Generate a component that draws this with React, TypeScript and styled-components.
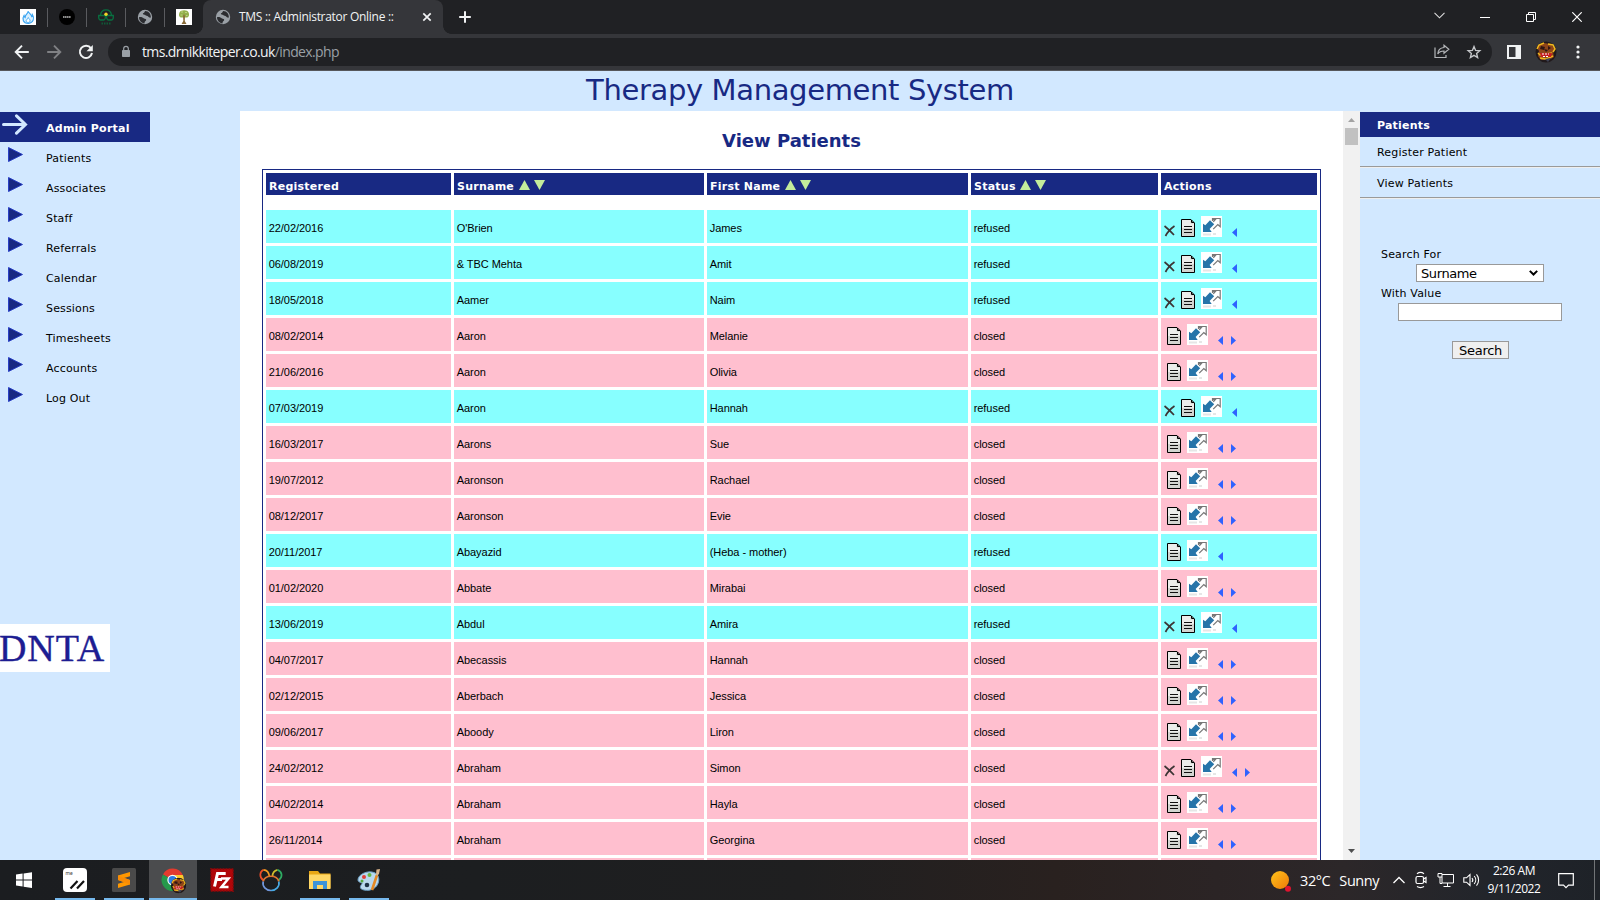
import React from "react";
import styled, { createGlobalStyle } from "styled-components";

const NAVY = "#182983";
const SKY = "#d2e8ff";
const VERDANA = `Verdana, "DejaVu Sans", sans-serif`;
const SEGOE = `"Segoe UI", "Open Sans", "Noto Sans", sans-serif`;

const Global = createGlobalStyle`
  * { box-sizing: border-box; }
  html, body { margin: 0; padding: 0; overflow: hidden; background: ${SKY}; }
  svg { display: block; flex: none; }
`;

const Screen = styled.div`
  width: 1600px;
  height: 900px;
  display: flex;
  flex-direction: column;
  overflow: hidden;
  font-family: ${VERDANA};
  color: #000;
`;

/* ---------- browser window ---------- */

const TabStrip = styled.div`
  height: 34px;
  flex: none;
  display: flex;
  align-items: center;
  background: #202124;
  padding-left: 9px;
`;

const PinnedTab = styled.div<{ $divider: boolean }>`
  width: 39px;
  height: 19px;
  display: flex;
  align-items: center;
  justify-content: center;
  border-right: 1px solid ${(p) => (p.$divider ? "#5a5b5f" : "transparent")};
`;

const ActiveTab = styled.div`
  width: 240px;
  height: 34px;
  margin-left: -1px;
  padding: 0 9px 0 12px;
  display: flex;
  align-items: center;
  position: relative;
  background: #35363a;
  border-radius: 8px 8px 0 0;
  &::before, &::after {
    content: "";
    position: absolute;
    bottom: 0;
    width: 8px;
    height: 8px;
  }
  &::before { left: -8px; background: radial-gradient(circle at 0 0, #202124 7.5px, #35363a 8px); }
  &::after { right: -8px; background: radial-gradient(circle at 100% 0, #202124 7.5px, #35363a 8px); }
`;

const TabTitle = styled.span`
  flex: 1;
  margin-left: 8px;
  font: 12px/16px ${SEGOE};
  letter-spacing: -0.29px;
  color: #f1f3f4;
  white-space: nowrap;
`;

const NewTab = styled.div`
  width: 44px;
  display: flex;
  justify-content: center;
`;

const WindowButtons = styled.div`
  margin-left: auto;
  display: flex;
  height: 28px;
`;

const WindowButton = styled.div`
  width: 46px;
  display: flex;
  align-items: center;
  justify-content: center;
  &:first-child { padding-bottom: 4px; }
`;

const Toolbar = styled.div`
  height: 37px;
  flex: none;
  display: flex;
  align-items: center;
  padding: 0 6px 1px 6px;
  background: #35363a;
  border-bottom: 1px solid #56575b;
`;

const NavButton = styled.div`
  width: 32px;
  display: flex;
  justify-content: center;
`;

const Omnibox = styled.div`
  width: 1384px;
  height: 28px;
  margin-left: 6px;
  padding: 0 9px 0 12px;
  display: flex;
  align-items: center;
  border-radius: 14px;
  background: #202124;
`;

const Url = styled.span`
  margin-left: 10px;
  flex: 1;
  font: 14px/20px ${SEGOE};
  letter-spacing: -0.62px;
  color: #f1f3f4;
  span { color: #9aa0a6; }
`;

const OmniAction = styled.div`
  width: 32px;
  display: flex;
  justify-content: center;
  &:last-child { width: 18px; margin-left: 7px; }
`;

const BarActions = styled.div`
  display: flex;
  align-items: center;
  margin-left: 6px;
`;

/* ---------- page ---------- */

const Banner = styled.header`
  height: 40px;
  flex: none;
  display: flex;
  justify-content: center;
  background: ${SKY};
  color: ${NAVY};
  font-size: 29px;
  line-height: 38px;
  letter-spacing: -0.36px;
  white-space: nowrap;
`;

const Body = styled.div`
  height: 749px;
  flex: none;
  display: flex;
  background: ${SKY};
`;

const Sidebar = styled.nav`
  width: 240px;
  padding-top: 1px;
  display: flex;
  flex-direction: column;
`;

const PortalTitle = styled.div`
  width: 150px;
  height: 30px;
  padding: 2px 0 0 2px;
  display: flex;
  background: ${NAVY};
  color: #fff;
  font-size: 11px;
  font-weight: bold;
  letter-spacing: 0.25px;
  line-height: 30px;
  span { margin-left: 18px; white-space: nowrap; }
`;

const MenuItem = styled.a`
  height: 30px;
  padding: 5px 0 0 8px;
  display: flex;
  font-size: 11px;
  letter-spacing: 0.16px;
  line-height: 24px;
  span { margin-left: 23px; }
`;

const Logo = styled.div`
  width: 110px;
  height: 48px;
  margin-top: 212px;
  overflow: hidden;
  background: #fff;
  color: #1d1d92;
  font: 38px/48px "Liberation Serif", serif;
  letter-spacing: 0.9px;
  text-indent: -1px;
  -webkit-text-stroke: 0.4px #1d1d92;
`;

const Main = styled.main`
  width: 1103px;
  padding: 0 22px;
  overflow: hidden;
  background: #fff;
`;

const Heading = styled.h1`
  height: 58px;
  margin: 0;
  text-align: center;
  color: ${NAVY};
  font-size: 18px;
  line-height: 60px;
  letter-spacing: 0;
`;

const Table = styled.div`
  display: flex;
  flex-direction: column;
  gap: 3px;
  padding: 3px;
  border: 1px solid ${NAVY};
`;

const Row = styled.div`
  flex: none;
  display: grid;
  grid-template-columns: 185px 250px 261px 187px 156px;
  column-gap: 3px;
`;

const HeadRow = styled(Row)`
  height: 22px;
  margin-bottom: 12px;
`;

const HeadCell = styled.div`
  display: flex;
  align-items: center;
  padding: 5px 0 0 3px;
  background: ${NAVY};
  color: #fff;
  font-size: 11px;
  font-weight: bold;
  letter-spacing: 0.24px;
  white-space: nowrap;
`;

const SortArrows = styled.span`
  display: flex;
  gap: 4px;
  margin: 0 0 4px 4.5px;
`;

const Cell = styled.div<{ $refused: boolean }>`
  height: 33px;
  padding: 1px 0 0 2.7px;
  background: ${(p) => (p.$refused ? "#87ffff" : "#ffbfcf")};
  font: 11px/34px Arial, "Liberation Sans", sans-serif;
  letter-spacing: -0.05px;
  white-space: nowrap;
`;

const ActionCell = styled(Cell)`
  display: flex;
  align-items: flex-start;
  padding: 6px 0 0 3px;
`;

const DeleteIcon = styled.svg`
  margin: 9px 3px 0 0;
`;
const NoteIcon = styled.svg`
  margin: 3px 6px 0 3px;
`;
const Pager = styled.div`
  display: flex;
  gap: 8px;
  margin: 12px 0 0 10px;
`;

const Scrollbar = styled.div`
  width: 17px;
  display: flex;
  flex-direction: column;
  align-items: center;
  padding: 7px 0;
  background: #f1f1f1;
`;

const Thumb = styled.div`
  width: 13px;
  height: 17px;
  margin: 6px 0 auto;
  background: #c1c1c1;
`;

const RightPanel = styled.aside`
  width: 240px;
  padding-top: 1px;
`;

const PanelTitle = styled.div`
  height: 25px;
  padding-left: 17px;
  background: ${NAVY};
  color: #fff;
  font-size: 11px;
  font-weight: bold;
  letter-spacing: 0.2px;
  line-height: 28px;
`;

const PanelLink = styled.a`
  display: block;
  height: 31px;
  padding-left: 17px;
  border-bottom: 1px solid #eee;
  box-shadow: inset 0 -1px 0 #9a9a9a;
  font-size: 11px;
  line-height: 32px;
  letter-spacing: 0.2px;
`;

const SearchForm = styled.div`
  display: flex;
  flex-direction: column;
  padding-top: 48px;
`;

const Label = styled.label`
  height: 18px;
  margin-left: 21px;
  font-size: 11px;
  line-height: 16px;
  letter-spacing: 0.17px;
`;

const Select = styled.div`
  width: 128px;
  height: 18px;
  margin: -1px 0 4px 56px;
  padding: 0 5px 0 4px;
  display: flex;
  align-items: center;
  justify-content: space-between;
  border: 1px solid #999;
  background: #fff;
  font-size: 13px;
  letter-spacing: -0.4px;
`;

const TextField = styled.input`
  width: 164px;
  height: 18px;
  margin: -1px 0 20px 38px;
  padding: 0 2px;
  border: 1px solid #999;
  border-radius: 0;
  background: #fff;
`;

const SearchButton = styled.button`
  width: 57px;
  height: 18px;
  margin-left: 92px;
  padding: 1px 0 0;
  border: 1px solid #999;
  border-radius: 0;
  background: #efefef;
  color: #000;
  font: 13px/16px ${VERDANA};
  letter-spacing: -0.3px;
`;

/* ---------- taskbar ---------- */

const Taskbar = styled.footer`
  height: 40px;
  flex: none;
  display: flex;
  background: linear-gradient(90deg, #1b1d20 0%, #1c1e20 30%, #1f1f20 50%, #29211f 66%, #2b2425 76%, #2c2729 84%, #22252b 93%, #1e2228 100%);
  color: #fff;
  font-family: ${SEGOE};
`;

const TaskButton = styled.div<{ $state?: "open" | "active" }>`
  width: 48px;
  height: 40px;
  margin-right: 1px;
  display: flex;
  flex-direction: column;
  align-items: center;
  justify-content: space-between;
  padding-top: 8px;
  background: ${(p) => (p.$state === "active" ? "#4b4c4e" : "transparent")};
  &::after {
    content: "";
    width: ${(p) => (p.$state === "active" ? 48 : 40)}px;
    height: 2px;
    background: ${(p) => (p.$state ? "#76b9ed" : "transparent")};
  }
  &:first-child { margin-right: 3px; }
`;

const Tray = styled.div`
  margin-left: auto;
  width: 331px;
  display: flex;
  align-items: center;
`;

const Weather = styled.div`
  width: 123px;
  display: flex;
  align-items: center;
  font-size: 14.5px;
  line-height: 20px;
  letter-spacing: -0.4px;
  padding-top: 2px;
  span { margin-left: 9px; white-space: nowrap; }
`;

const TrayIcons = styled.div`
  width: 88px;
  display: flex;
  align-items: center;
  justify-content: space-between;
`;

const Clock = styled.div`
  width: 68px;
  margin-left: 0;
  text-align: center;
  font-size: 12px;
  line-height: 18px;
  letter-spacing: -0.45px;
`;

const Notice = styled.div`
  margin-left: 10px;
`;

const DesktopEdge = styled.div`
  width: 1px;
  height: 40px;
  margin-left: 20px;
  background: #717477;
`;

/* ---------- drawings ---------- */

const Globe = () => (
  <svg width="16" height="16" viewBox="0 0 16 16">
    <circle cx="8" cy="8" r="7.2" fill="#9aa0a6" />
    <path d="M2 8.2c2-.4 4 .2 5 1.4 1 .4 2.300.2 2.200 1.500-.2 1.300-1.800 1.200-1.700 3.300C4.500 14 2 11.500 2 8.200zM8.200 2c-1 1-.7 2-2.200 2.200-.6.800.6 1.600 2 1.600.8 1.400 2.400.4 3.200 1.800.4.900 1.500 1.200 2.600 1 .4-3.400-2-6.600-5.600-6.600z" fill="#2b2c30" />
  </svg>
);

const Flame = () => (
  <svg width="16" height="16" viewBox="0 0 16 16">
    <rect width="16" height="16" fill="#fff" />
    <path d="M8.300 2c.4 2.500 3.200 3.300 3.400 5.500.7-.3.800-1 .8-1.700 2.200 3.400.9 8-4 8.500C3 14.500 1.800 10 4 6.500c.2 1 .4 1.500 1.100 1.900C5 5.500 8.200 5 8.300 2z" fill="#d9f0ff" stroke="#3ba5f2" strokeWidth="1.200" />
    <path d="M8.300 8.500c.3 1.300 1.900 1.700 1.800 3.300-.2 2.200-3.800 2.200-4 0 0-1.500 1.900-1.700 2.200-3.300z" fill="#fff" stroke="#3ba5f2" strokeWidth=".9" />
  </svg>
);

const BlackDisc = () => (
  <svg width="16" height="16" viewBox="0 0 16 16">
    <circle cx="8" cy="8" r="8" fill="#000" />
    <path d="M4 8h8" stroke="#bbb" strokeWidth="1.600" strokeDasharray="1.600 .4" />
  </svg>
);

const GreenCrest = () => (
  <svg width="16" height="16" viewBox="0 0 16 16" fill="none" stroke="#087040" strokeWidth="1.300">
    <path d="M2.500 6C3.500-.8 12.500-.8 13.500 6M.7 6.500h6.600c.4 2.500-.6 4.500-1.600 4.500H2.500C1 11 .5 9 .7 6.500zM15.300 6.500H8.700c-.4 2.500.6 4.500 1.600 4.500h3.200c1.500 0 2-2 1.800-4.500z" />
    <path d="M3.500 14.500h9" strokeDasharray="1.500 1" strokeWidth="2" opacity=".7" />
    <circle cx="8" cy="5.200" r="1.700" fill="#f4d52a" stroke="none" />
  </svg>
);

const TreeIcon = () => (
  <svg width="16" height="16" viewBox="0 0 16 16">
    <rect width="16" height="16" fill="#fff" />
    <path d="M3.500 3.500C4.500.5 11.500.2 12.600 3.500c1 2.500.3 5-2 5H5.600C3 8.500 2.500 6 3.500 3.500z" fill="#93b04c" />
    <path d="M5 3h2M9 3.500h2M4.500 6h2M10 6.500h1.500" stroke="#bfd083" />
    <path d="M7 5l.3 7-1.800 3h5l-1.700-3L9 5 8 7z" fill="#896b38" />
  </svg>
);

const Lizard = ({ size }: { size: number }) => (
  <svg width={size} height={size} viewBox="0 0 22 22">
    <circle cx="11" cy="11" r="10.500" fill="#20191b" />
    <path d="M3 4l6-2 6 1 5 4-2 4 1 5-5 3H6l-3-4 1-5-2-3z" fill="#8f4519" />
    <path d="M2 8l2-4 5-2M13 3l5 1 2 4-2 3M3 12l2 2 12-2M5 17l6 1 7-3" fill="none" stroke="#f0b91e" strokeWidth="1.500" />
    <path d="M6 5l4 1-1 3-4-1zM13 5l3 2-3 2zM9 8l4 1-2 2z" fill="#2e1512" />
    <path d="M5 12h12l-1 4H6z" fill="#c51e21" />
    <path d="M7 13h7M8 15.500h6" stroke="#fff" strokeWidth="1" strokeDasharray="2 1" />
    <path d="M10 18l6-1-3 4z" fill="#3e4356" />
  </svg>
);

const DocIcon = () => (
  <NoteIcon width="14" height="18" viewBox="0 0 14 18">
    <path d="M.5.500h9.500l3.500 3.500v13.500H.5z" fill="#d3d5d1" stroke="#000" />
    <path d="M1 1h8.500v3.500H13V9H1z" fill="#ecedeb" />
    <path d="M10.500 1v2.500H13" fill="none" stroke="#000" />
    <path d="M3 7.500h8M3 10.500h8M3 13.500h8" stroke="#111" />
  </NoteIcon>
);

const TransferIcon = () => (
  <svg width="21" height="21" viewBox="0 0 21 21">
    <rect width="21" height="21" fill="#fff" />
    <path d="M2 18.500h8M12 18h3" stroke="#e6e6e6" strokeWidth="2" />
    <path d="M11.500 5V2.500h7.700v8.200l-2.400-2.200-4.600 4.700M11.300 3.600h3L12.300 5.800" fill="none" stroke="#777" strokeWidth="1.200" />
    <path d="M2 7.700L4.300 9.200 9 4.200 13.200 8.200 8.600 13 10.700 16H2z" fill="#2674a9" />
  </svg>
);

const CrossIcon = () => (
  <DeleteIcon width="11" height="12" viewBox="0 0 11 12">
    <path d="M.5 1c3.200 2.500 6 5.300 9.500 9M10.500 1C7 3.500 3.500 7 1.500 11" fill="none" stroke="#3d3535" strokeWidth="1.700" />
  </DeleteIcon>
);

const PageArrow = ({ next = false }: { next?: boolean }) => (
  <svg width="5" height="9" viewBox="0 0 5 9">
    <path d={next ? "M0 0l5 4.500L0 9z" : "M5 0v9L0 4.500z"} fill="#2f62ff" />
  </svg>
);

const Sort = () => (
  <SortArrows>
    <svg width="11" height="10" viewBox="0 0 11 10"><path d="M5.500 0L11 10H0z" fill="#c3ec9b" /></svg>
    <svg width="11" height="10" viewBox="0 0 11 10"><path d="M0 0h11L5.500 10z" fill="#c3ec9b" /></svg>
  </SortArrows>
);

/* ---------- data ---------- */

type Patient = [date: string, surname: string, first: string, status: "refused" | "closed", canDelete?: boolean];

const patients: Patient[] = [
  ["22/02/2016", "O'Brien", "James", "refused", true],
  ["06/08/2019", "& TBC Mehta", "Amit", "refused", true],
  ["18/05/2018", "Aamer", "Naim", "refused", true],
  ["08/02/2014", "Aaron", "Melanie", "closed"],
  ["21/06/2016", "Aaron", "Olivia", "closed"],
  ["07/03/2019", "Aaron", "Hannah", "refused", true],
  ["16/03/2017", "Aarons", "Sue", "closed"],
  ["19/07/2012", "Aaronson", "Rachael", "closed"],
  ["08/12/2017", "Aaronson", "Evie", "closed"],
  ["20/11/2017", "Abayazid", "(Heba - mother)", "refused"],
  ["01/02/2020", "Abbate", "Mirabai", "closed"],
  ["13/06/2019", "Abdul", "Amira", "refused", true],
  ["04/07/2017", "Abecassis", "Hannah", "closed"],
  ["02/12/2015", "Aberbach", "Jessica", "closed"],
  ["09/06/2017", "Aboody", "Liron", "closed"],
  ["24/02/2012", "Abraham", "Simon", "closed", true],
  ["04/02/2014", "Abraham", "Hayla", "closed"],
  ["26/11/2014", "Abraham", "Georgina", "closed"],
];

const menu = ["Patients", "Associates", "Staff", "Referrals", "Calendar", "Sessions", "Timesheets", "Accounts", "Log Out"];
const columns = ["Registered", "Surname", "First Name", "Status", "Actions"];
const pinned = [Flame, BlackDisc, GreenCrest, Globe, TreeIcon];

const PatientRow = ({ patient }: { patient: Patient }) => {
  const [date, surname, first, status, canDelete] = patient;
  const refused = status === "refused";
  return (
    <Row>
      <Cell $refused={refused}>{date}</Cell>
      <Cell $refused={refused}>{surname}</Cell>
      <Cell $refused={refused}>{first}</Cell>
      <Cell $refused={refused}>{status}</Cell>
      <ActionCell $refused={refused}>
        {canDelete && <CrossIcon />}
        <DocIcon />
        <TransferIcon />
        <Pager>
          <PageArrow />
          {!refused && <PageArrow next />}
        </Pager>
      </ActionCell>
    </Row>
  );
};

const Browser = () => (
  <>
    <TabStrip>
      {pinned.map((Icon, i) => (
        <PinnedTab key={i} $divider={i < pinned.length - 1}><Icon /></PinnedTab>
      ))}
      <ActiveTab>
        <Globe />
        <TabTitle>TMS :: Administrator Online ::</TabTitle>
        <svg width="14" height="14" viewBox="0 0 14 14"><path d="M3.300 3.300l7.400 7.400M10.700 3.300l-7.400 7.400" stroke="#f1f3f4" strokeWidth="1.700" /></svg>
      </ActiveTab>
      <NewTab>
        <svg width="14" height="14" viewBox="0 0 14 14"><path d="M7 1.200v11.600M1.200 7h11.600" stroke="#f1f3f4" strokeWidth="2" /></svg>
      </NewTab>
      <WindowButtons>
        <WindowButton><svg width="11" height="7" viewBox="0 0 11 7"><path d="M.5.800l5 5 5-5" fill="none" stroke="#ddd" strokeWidth="1.100" /></svg></WindowButton>
        <WindowButton><svg width="10" height="11" viewBox="0 0 10 11"><path d="M0 5.500h10" stroke="#fff" /></svg></WindowButton>
        <WindowButton><svg width="10" height="10" viewBox="0 0 10 10"><path d="M.5 2.500h7v7h-7zM2.500 2.500v-2h7v7h-2" fill="none" stroke="#fff" /></svg></WindowButton>
        <WindowButton><svg width="10" height="10" viewBox="0 0 10 10"><path d="M.3.300l9.400 9.400M9.700.300L.3 9.700" stroke="#fff" strokeWidth="1.200" /></svg></WindowButton>
      </WindowButtons>
    </TabStrip>
    <Toolbar>
      <NavButton><svg width="16" height="16" viewBox="0 0 16 16"><path d="M14.800 8H2.200M8 1.700L1.700 8 8 14.300" fill="none" stroke="#f1f3f4" strokeWidth="1.900" /></svg></NavButton>
      <NavButton><svg width="16" height="16" viewBox="0 0 16 16"><path d="M1.200 8h12.600M8 1.700L14.300 8 8 14.300" fill="none" stroke="#808184" strokeWidth="1.900" /></svg></NavButton>
      <NavButton><svg width="16" height="16" viewBox="0 0 16 16"><path d="M13 4.300A6.100 6.100 0 1 0 14 9" fill="none" stroke="#f1f3f4" strokeWidth="2" /><path d="M14.800 1v6.300H8.500z" fill="#f1f3f4" /></svg></NavButton>
      <Omnibox>
        <svg width="12" height="14" viewBox="0 0 12 14"><rect x="2" y="5" width="8" height="7" rx=".8" fill="#9aa0a6" /><path d="M3.700 5.500V3.600a2.300 2.300 0 0 1 4.600 0v1.900" fill="none" stroke="#9aa0a6" strokeWidth="1.200" /></svg>
        <Url>tms.drnikkiteper.co.uk<span>/index.php</span></Url>
        <OmniAction><svg width="16" height="15" viewBox="0 0 16 15" fill="none" stroke="#b4b6b9" strokeWidth="1.200"><path d="M1 3.500v10h11v-2.500" /><path d="M10 1.300l4.800 4-4.800 4V7C7 7 5 8 3.800 10 4 6 6.500 3.800 10 3.500z" /></svg></OmniAction>
        <OmniAction><svg width="16" height="16" viewBox="0 0 16 16"><path d="M8 2.500l1.600 3.900 4.200.3-3.200 2.700 1 4.100L8 11.300l-3.600 2.200 1-4.100-3.200-2.700 4.200-.3z" fill="none" stroke="#c5c7ca" strokeWidth="1.400" /></svg></OmniAction>
      </Omnibox>
      <BarActions>
        <NavButton><svg width="14" height="14" viewBox="0 0 14 14"><path d="M0 0h14v14H0zM2 2v10h6.500V2z" fill="#f1f3f4" fillRule="evenodd" /></svg></NavButton>
        <NavButton><Lizard size={22} /></NavButton>
        <NavButton><svg width="4" height="14" viewBox="0 0 4 14" fill="#f1f3f4"><circle cx="2" cy="2" r="1.600" /><circle cx="2" cy="7" r="1.600" /><circle cx="2" cy="12" r="1.600" /></svg></NavButton>
      </BarActions>
    </Toolbar>
  </>
);

const Page = () => (
  <>
    <Banner>Therapy Management System</Banner>
    <Body>
      <Sidebar>
        <PortalTitle>
          <svg width="26" height="21" viewBox="0 0 26 21"><path d="M1.500 10.500h22M14.500 1.800l9 8.700-9 8.700" fill="none" stroke={SKY} strokeWidth="3" strokeLinecap="round" /></svg>
          <span>Admin Portal</span>
        </PortalTitle>
        {menu.map((item) => (
          <MenuItem key={item}>
            <svg width="15" height="15" viewBox="0 0 15 15"><path d="M.5.500l14 7-14 7z" fill={NAVY} stroke="#2138c4" strokeWidth=".9" /></svg>
            <span>{item}</span>
          </MenuItem>
        ))}
        <Logo>DNTA</Logo>
      </Sidebar>
      <Main>
        <Heading>View Patients</Heading>
        <Table>
          <HeadRow>
            {columns.map((c, i) => (
              <HeadCell key={c}>{c}{i > 0 && i < 4 && <Sort />}</HeadCell>
            ))}
          </HeadRow>
          {patients.map((p) => <PatientRow key={p[0]} patient={p} />)}
          <Row>{columns.map((c) => <Cell key={c} $refused={false} />)}</Row>
        </Table>
      </Main>
      <Scrollbar>
        <svg width="7" height="4" viewBox="0 0 7 4"><path d="M3.500 0L7 4H0z" fill="#a3a3a3" /></svg>
        <Thumb />
        <svg width="7" height="4" viewBox="0 0 7 4"><path d="M0 0h7L3.500 4z" fill="#505050" /></svg>
      </Scrollbar>
      <RightPanel>
        <PanelTitle>Patients</PanelTitle>
        <PanelLink>Register Patient</PanelLink>
        <PanelLink>View Patients</PanelLink>
        <SearchForm>
          <Label>Search For</Label>
          <Select>
            Surname
            <svg width="9" height="6" viewBox="0 0 9 6"><path d="M.8.900l3.700 3.600L8.200.900" fill="none" stroke="#000" strokeWidth="2" /></svg>
          </Select>
          <Label>With Value</Label>
          <TextField />
          <SearchButton>Search</SearchButton>
        </SearchForm>
      </RightPanel>
    </Body>
  </>
);

const Tasks = () => (
  <Taskbar>
    <TaskButton>
      <svg width="24" height="24" viewBox="0 0 24 24"><path d="M4 6.600l6.600-1v6H4zM11.600 5.400L20 4.200v7.400h-8.400zM4 12.600h6.600v6L4 17.600zM11.600 12.600H20V20l-8.400-1.200z" fill="#fff" /></svg>
    </TaskButton>
    <TaskButton $state="open">
      <svg width="24" height="24" viewBox="0 0 24 24"><rect width="24" height="24" rx="4" fill="#fff" /><path d="M7.500 20.500l7-7.500M14 20.500l7-7.500" stroke="#111" strokeWidth="2.200" /><text x="2.500" y="6.500" fontSize="5" fontFamily="Roboto, sans-serif" fill="#444">me</text></svg>
    </TaskButton>
    <TaskButton $state="open">
      <svg width="24" height="24" viewBox="0 0 24 24"><rect width="24" height="24" rx="1.500" fill="#4a4a4a" /><path d="M6 7.500L18 4v4.200l-6 1.800 6 2v4.500L6 20v-4.200l6-1.800-6-2z" fill="#ff9800" /><path d="M6 12l12 4.500V12L6 7.500z" fill="#f98c05" /></svg>
    </TaskButton>
    <TaskButton $state="active">
      <svg width="26" height="26" viewBox="0 0 26 26">
        <path d="M12.500 12L3 6.500A11 11 0 0 1 22.800 7H12.500z" fill="#e33b2e" />
        <path d="M12.500 12V7h10.300A11 11 0 0 1 13 22.900z" fill="#fcc92b" />
        <path d="M12.500 12L3 6.500A11 11 0 0 0 13 22.900l3-6z" fill="#26994b" />
        <circle cx="12.500" cy="12" r="5.200" fill="#fff" /><circle cx="12.500" cy="12" r="4" fill="#2f7de1" />
        <g transform="translate(10.500 9.500)"><Lizard size={16} /></g>
      </svg>
    </TaskButton>
    <TaskButton>
      <svg width="24" height="24" viewBox="0 0 24 24"><rect x=".7" y=".7" width="22.600" height="22.600" fill="#b00609" stroke="#760b0c" strokeWidth="1.400" strokeDasharray="1.500 1.500" /><path d="M4.500 18.500L7.500 5.500h8.200M6.500 11.500H12" fill="none" stroke="#fff" strokeWidth="3" /><path d="M11 10.500h7.500l-7 8.500h7" fill="none" stroke="#fff" strokeWidth="2.500" /></svg>
    </TaskButton>
    <TaskButton>
      <svg width="24" height="24" viewBox="0 0 24 24" fill="none" strokeWidth="1.700">
        <path d="M4.500 12.500C0 9 .5 4 4.500 1.800" stroke="#ee4d28" />
        <path d="M4.500 1.800C8 2 10 5 10.500 8.500" stroke="#f59c22" />
        <path d="M13.500 8.500C13.500 5 15 2.500 18.500 1.800" stroke="#d1be29" />
        <path d="M18.500 1.800C23.500 4 24 9 19.500 12.500" stroke="#2eac62" />
        <path d="M4.200 13.500C6 6.500 18 6.500 19.800 13.500" stroke="#df7531" />
        <path d="M4.200 13.500C3 18.500 7 22.500 12 22.500" stroke="#7197db" />
        <path d="M19.800 13.500C21 18.500 17 22.500 12 22.500" stroke="#48a9e3" />
      </svg>
    </TaskButton>
    <TaskButton $state="open">
      <svg width="24" height="24" viewBox="0 0 24 24"><path d="M1 3h9l2 2.500h10.500V20H1z" fill="#e9a714" /><path d="M1 6.500h21.500V21H1z" fill="#ffd765" /><path d="M5 21v-8h14v8h-4v-4H9v4z" fill="#3e94d8" /></svg>
    </TaskButton>
    <TaskButton $state="open">
      <svg width="26" height="24" viewBox="0 0 26 24">
        <path d="M12 4c8-1 12 4 10.500 10S15 23.500 8 22c-5-1-4-4-2-6 1-2-4-1-4-4 0-4 5-7.500 10-8z" fill="#b9d9ee" stroke="#6b9fc3" />
        <circle cx="8" cy="9" r="2" fill="#e0403a" /><circle cx="13.500" cy="7" r="2" fill="#68b842" /><circle cx="6" cy="13" r="1.500" fill="#58a93f" /><circle cx="11" cy="17" r="2.300" fill="#1d3346" />
        <path d="M16 22l5-15" stroke="#e58a25" strokeWidth="2.600" /><path d="M20 6l.5-4.500L24 1l-1 5-2 2z" fill="#dbb58b" />
      </svg>
    </TaskButton>
    <Tray>
      <Weather>
        <svg width="22" height="22" viewBox="0 0 22 22"><defs><linearGradient id="sun" x1="0" y1="0" x2="1" y2="1"><stop offset="0" stopColor="#ffc31a" /><stop offset="1" stopColor="#ee7a09" /></linearGradient></defs><circle cx="11" cy="10" r="9" fill="url(#sun)" /><circle cx="19" cy="18.700" r="3" fill="#e1132f" /></svg>
        <span>32°C</span><span>Sunny</span>
      </Weather>
      <TrayIcons>
        <svg width="14" height="8" viewBox="0 0 14 8"><path d="M1.500 7L7 1.500 12.500 7" fill="none" stroke="#fff" strokeWidth="1.300" /></svg>
        <svg width="13" height="18" viewBox="0 0 13 18" fill="none" stroke="#fff" strokeWidth="1.200"><rect x="1" y="5.500" width="7.500" height="7" rx="1.500" /><path d="M8.500 8l2.500-1.500v5L8.500 10M2 2.800c2-1.500 5-1.500 7 0M2 15.500c2 1.200 5 1.200 7 0" /></svg>
        <svg width="17" height="16" viewBox="0 0 17 16" fill="none" stroke="#fff"><path d="M5 2.500h11.500v8.500H5V5M10.500 11v3M6.500 14.500h7M1 1.500h4v3.500H1zM3 5v6.500h2" /></svg>
        <svg width="17" height="16" viewBox="0 0 17 16" fill="none" stroke="#fff" strokeWidth="1.100"><path d="M.8 5.800h2.700L7 2.500v11L3.500 10.200H.8zM9 6c1 1.200 1 2.800 0 4M11.200 4c2 2.300 2 5.700 0 8M13.500 2.300c2.800 3.300 2.800 8 0 11.400" /></svg>
      </TrayIcons>
      <Clock>2:26 AM<br />9/11/2022</Clock>
      <Notice><svg width="16" height="17" viewBox="0 0 16 17"><path d="M.7 1.700h14.600v11.500h-4.800L8 15.700l-2.500-2.500H.7z" fill="none" stroke="#fff" strokeWidth="1.200" /></svg></Notice>
      <DesktopEdge />
    </Tray>
  </Taskbar>
);

export default function App() {
  return (
    <Screen>
      <Global />
      <Browser />
      <Page />
      <Tasks />
    </Screen>
  );
}
